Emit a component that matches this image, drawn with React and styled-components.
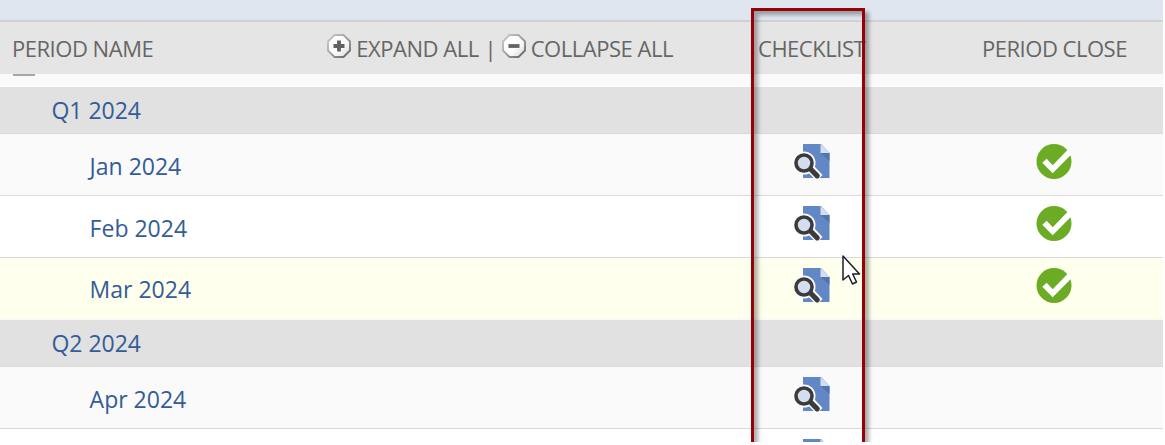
import React from "react";
import styled, { createGlobalStyle } from "styled-components";

const GlobalStyle = createGlobalStyle`
  body { margin: 0; background: #fff; overflow: hidden; }
  * { box-sizing: border-box; }
`;

const Page = styled.div`
  position: relative;
  width: 1163px;
  height: 442px;
  overflow: hidden;
  background: #fff;
  font-family: "Open Sans", sans-serif;
`;

const TopBand = styled.div`
  height: 20px;
  background: #dfe6f0;
`;

const columns = "752px 120px 1fr";

const HeaderRow = styled.div`
  display: grid;
  grid-template-columns: ${columns};
  align-items: center;
  height: 54px;
  border-top: 2px solid #d1d1d1;
  background: #e5e5e5;
  color: #666;
  font-size: 22px;
  line-height: 30px;
  letter-spacing: -0.48px;
  white-space: nowrap;
`;

const NameHeader = styled.div`
  display: flex;
  padding-left: 12px;
`;

const Label = styled.span`
  width: ${(p) => (p.$width ? `${p.$width}px` : "auto")};
`;

const Actions = styled.div`
  display: flex;
  align-items: center;
  margin-left: 173px;

  svg { flex: none; margin-top: -5px; }
`;

const CheckHeader = styled.div`
  padding-left: 6px;
`;

const CloseHeader = styled.div`
  padding-left: 110px;
`;

const YearStrip = styled.div`
  height: 13px;
  padding-left: 13px;
  background: #fafafa;
  border-bottom: 1px solid #fefefe;
`;

const YearMark = styled.div`
  width: 22px;
  height: 2px;
  background: #a6a6a6;
`;

const Row = styled.div`
  display: grid;
  grid-template-columns: ${columns};
  align-items: center;
  height: ${(p) => (p.$quarter ? 47 : 62)}px;
  background: ${(p) => p.$bg};
  border-bottom: ${(p) => (p.$last ? "2px solid #fafaf3" : "1px solid #d9d9d9")};
`;

const PeriodName = styled.div`
  padding-left: ${(p) => (p.$quarter ? 51.4 : 89.6)}px;
  padding-top: ${(p) => (p.$quarter ? 0 : 3)}px;
  color: #335c98;
  font-size: 23px;
  line-height: 31px;
  white-space: nowrap;
`;

const IconCell = styled.div`
  display: flex;
  height: 100%;
  padding-top: 9px;
  padding-left: ${(p) => p.$indent}px;
`;

const Highlight = styled.div`
  position: absolute;
  left: 751px;
  top: 8px;
  width: 114px;
  height: 460px;
  border: 3px solid #980007;
  box-shadow: 4px 4px 4px rgba(0, 0, 0, 0.32), inset 4px 4px 4px rgba(0, 0, 0, 0.32);
`;

const Pointer = styled.svg`
  position: absolute;
  left: 841px;
  top: 254px;
`;

const Octagon = ({ plus }) => (
  <svg width="24" height="24" viewBox="0 0 24 24">
    <defs>
      <linearGradient id={plus ? "edgeA" : "edgeB"} x1="0" y1="0" x2="1" y2="1">
        <stop offset="0" stopColor="#cacac4" />
        <stop offset="0.5" stopColor="#a0a09a" />
        <stop offset="1" stopColor="#5c5c5a" />
      </linearGradient>
      <linearGradient id={plus ? "faceA" : "faceB"} x1="0" y1="0" x2="1" y2="1">
        <stop offset="0" stopColor="#fff" />
        <stop offset="0.6" stopColor="#fafafa" />
        <stop offset="1" stopColor="#d2d2d0" />
      </linearGradient>
    </defs>
    <path
      d="M7.5 1h9L23 7.5v9L16.5 23h-9L1 16.5v-9z"
      fill={`url(#${plus ? "faceA" : "faceB"})`}
      stroke={`url(#${plus ? "edgeA" : "edgeB"})`}
      strokeWidth="1.8"
      strokeLinejoin="round"
    />
    <path d={plus ? "M6.5 12h11M12 6.5v11" : "M6.5 12h11"} stroke="#626262" strokeWidth="3.8" />
  </svg>
);

const ReviewIcon = () => (
  <svg width="38" height="37" viewBox="0 0 38 37">
    <path d="M9 1h18l8.5 9v25H9z" fill="#6187c5" />
    <path d="M26.5 10h9v8z" fill="#5275b0" />
    <path d="M26.5 1l9 9h-9z" fill="#d3dff1" />
    <path d="M17 26l8.5 9" stroke="#fbfbfb" strokeWidth="8.5" />
    <circle cx="10" cy="20" r="11.5" fill="#fbfbfb" />
    <path d="M16 25.500l7.200 7.300" stroke="#3b3b3b" strokeWidth="5.200" strokeLinecap="round" />
    <circle cx="10" cy="20" r="8" fill="#d3dff1" stroke="#3b3b3b" strokeWidth="3.600" />
  </svg>
);

const ClosedIcon = () => (
  <svg width="38" height="37" viewBox="0 0 38 37">
    <circle cx="19" cy="18.5" r="17.5" fill="#6cac25" />
    <path d="M7.300 19.700l4.400-4 6 6.600L32.700 6.700l4.300 4-19.300 19.600z" fill="#fff" />
  </svg>
);

const periods = [
  { name: "Q1 2024", quarter: true, bg: "#e1e1e1" },
  { name: "Jan 2024", bg: "#fafafa", closed: true },
  { name: "Feb 2024", bg: "#fff", closed: true },
  { name: "Mar 2024", bg: "#ffffed", closed: true, last: true },
  { name: "Q2 2024", quarter: true, bg: "#e1e1e1" },
  { name: "Apr 2024", bg: "#fafafa" },
  { name: "", bg: "#fff" },
];

export default function App() {
  return (
    <Page>
      <GlobalStyle />
      <TopBand />
      <HeaderRow>
        <NameHeader>
          <Label $width={142}>PERIOD NAME</Label>
          <Actions>
            <Octagon plus />
            <Label $width={133.5}>&nbsp;EXPAND ALL</Label>
            <Label $width={17}>|</Label>
            <Octagon />
            <Label>&nbsp;COLLAPSE ALL</Label>
          </Actions>
        </NameHeader>
        <CheckHeader>CHECKLIST</CheckHeader>
        <CloseHeader>PERIOD CLOSE</CloseHeader>
      </HeaderRow>
      <YearStrip>
        <YearMark />
      </YearStrip>
      {periods.map((p, i) => (
        <Row key={i} $quarter={p.quarter} $bg={p.bg} $last={p.last}>
          <PeriodName $quarter={p.quarter}>{p.name}</PeriodName>
          <IconCell $indent={42}>{!p.quarter && <ReviewIcon />}</IconCell>
          <IconCell $indent={163}>{p.closed && <ClosedIcon />}</IconCell>
        </Row>
      ))}
      <Highlight />
      <Pointer width="20" height="32" viewBox="0 0 20 32">
        <path
          d="M2 2v24l5.500-4.500 4 8.500 4-2-3.800-8H18.500z"
          fill="#fff"
          stroke="#1d1d2b"
          strokeWidth="1.5"
          strokeLinejoin="round"
        />
      </Pointer>
    </Page>
  );
}
